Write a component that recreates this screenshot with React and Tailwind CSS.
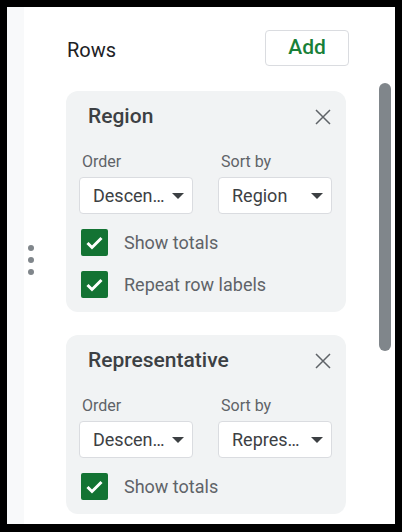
const font = { fontFamily: 'Roboto, "Noto Sans", sans-serif' };

const Caret = () => (
  <svg width="12" height="6" viewBox="0 0 12 6" className="shrink-0">
    <path d="M0 0h12L6 6z" fill="#3c4043" />
  </svg>
);

const Close = () => (
  <svg width="16" height="16" viewBox="0 0 16 16" className="shrink-0">
    <path d="M1 1l14 14M15 1L1 15" stroke="#5f6368" strokeWidth="1.5" />
  </svg>
);

const Check = () => (
  <svg width="27" height="27" viewBox="0 0 27 27" className="shrink-0">
    <rect width="27" height="27" rx="2" fill="#137333" />
    <path d="M6.5 14l4.5 4.5 9.5-9.5" stroke="#fff" strokeWidth="3" fill="none" />
  </svg>
);

const Select = ({ value }) => (
  <div className="flex h-[37px] w-[114px] items-center justify-between rounded-[4px] border border-[#dadce0] bg-white pl-[13px] pr-[8px]">
    <span className="text-[18px] leading-none text-[#3c4043]">{value}</span>
    <Caret />
  </div>
);

const Field = ({ label, value }) => (
  <div className="flex flex-col">
    <span className="pl-[3px] text-[16px] leading-[20px] text-[#5f6368]">{label}</span>
    <div className="mt-[5px]">
      <Select value={value} />
    </div>
  </div>
);

const Card = ({ title, sortBy, options }) => (
  <div className="w-[280px] rounded-[12px] bg-[#f1f3f4] pb-[14px] pl-[13px] pr-[14px] pt-[11px]">
    <div className="flex h-[30px] items-center justify-between pl-[9px] pr-px">
      <span className="text-[21px] font-medium text-[#3c4043]">{title}</span>
      <Close />
    </div>
    <div className="mt-[20px] flex gap-[25px]">
      <Field label="Order" value="Descen…" />
      <Field label="Sort by" value={sortBy} />
    </div>
    <div className="mt-[15px] flex flex-col gap-[15px] pl-[2px]">
      {options.map((o) => (
        <div key={o} className="flex items-center gap-[16px]">
          <Check />
          <span className="text-[18px] leading-none text-[#5f6368]">{o}</span>
        </div>
      ))}
    </div>
  </div>
);

export default function App() {
  return (
    <div className="h-[532px] w-[402px] bg-black pb-[8px] pl-[7px] pr-[7px] pt-[7px]" style={font}>
      <div className="flex h-full bg-white">
        <div className="w-[17px] bg-[#f8f9fa]" />
        <div className="flex w-[14px] flex-col items-center justify-center gap-[6px] pb-[12px]">
          <span className="h-[6px] w-[6px] rounded-full bg-[#80868b]" />
          <span className="h-[6px] w-[6px] rounded-full bg-[#80868b]" />
          <span className="h-[6px] w-[6px] rounded-full bg-[#80868b]" />
        </div>
        <div className="flex flex-1 flex-col pl-[28px] pt-[23px]">
          <div className="flex w-[283px] items-center justify-between">
            <span className="mt-[4px] pl-px text-[20px] text-[#202124]">Rows</span>
            <button className="flex h-[36px] w-[84px] items-center justify-center rounded-[4px] border border-[#dadce0] text-[21px] font-medium text-[#188038]">
              Add
            </button>
          </div>
          <div className="mt-[25px] flex flex-col gap-[23px]">
            <Card title="Region" sortBy="Region" options={['Show totals', 'Repeat row labels']} />
            <Card title="Representative" sortBy="Repres…" options={['Show totals']} />
          </div>
        </div>
        <div className="w-[16px] pt-[76px]">
          <div className="h-[268px] w-[12px] rounded-full bg-[#80868b]" />
        </div>
      </div>
    </div>
  );
}
